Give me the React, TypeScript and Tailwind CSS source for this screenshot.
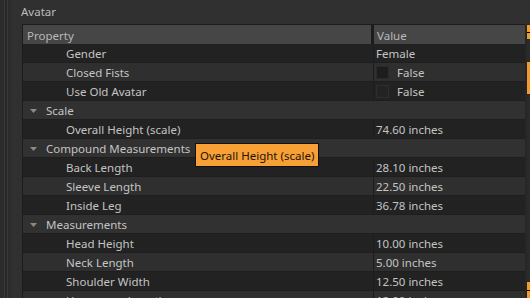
import React from "react";

type Row =
  | { kind: "cat"; label: string }
  | { kind: "prop"; label: string; value: string; check?: "filled" | "empty" };

const rows: Row[] = [
  { kind: "prop", label: "Gender", value: "Female" },
  { kind: "prop", label: "Closed Fists", value: "False", check: "filled" },
  { kind: "prop", label: "Use Old Avatar", value: "False", check: "empty" },
  { kind: "cat", label: "Scale" },
  { kind: "prop", label: "Overall Height (scale)", value: "74.60 inches" },
  { kind: "cat", label: "Compound Measurements" },
  { kind: "prop", label: "Back Length", value: "28.10 inches" },
  { kind: "prop", label: "Sleeve Length", value: "22.50 inches" },
  { kind: "prop", label: "Inside Leg", value: "36.78 inches" },
  { kind: "cat", label: "Measurements" },
  { kind: "prop", label: "Head Height", value: "10.00 inches" },
  { kind: "prop", label: "Neck Length", value: "5.00 inches" },
  { kind: "prop", label: "Shoulder Width", value: "12.50 inches" },
  { kind: "prop", label: "Upper arm Length", value: "12.00 inches" },
];

const Caret = () => (
  <svg width="7" height="4" viewBox="0 0 7 4" className="ml-[7px] mr-[9px] -mt-[1px]">
    <path d="M0 0 L7 0 L3.5 4 Z" fill="#8a8a8a" />
  </svg>
);

const PropertyRow = ({ row, odd }: { row: Row; odd: boolean }) => {
  const bg = odd ? "bg-[#2f2f2f]" : "bg-[#222222]";
  if (row.kind === "cat") {
    return (
      <div className="shrink-0 flex items-center pt-[2px] h-[19px] border-b border-[#1e1e1e] bg-[#313131]">
        <Caret />
        <span className="text-[#c4c4c4]">{row.label}</span>
      </div>
    );
  }
  return (
    <div className={`shrink-0 flex h-[19px] border-b border-[#1e1e1e] ${bg}`}>
      <div className="w-[350px] flex items-center pt-[2px] pl-[43px] text-[#c4c4c4]">{row.label}</div>
      <div className="w-px bg-[#1c1c1c]" />
      <div className="flex-1 flex items-center pt-[2px] pl-[2px] text-[#c4c4c4]">
        {row.check && (
          <span
            className={`w-[13px] h-[13px] mr-[8px] -mt-[2px] border ${
              row.check === "filled" ? "bg-[#1d1d1d] border-[#2b2b2b]" : "bg-[#232323] border-[#2e2e2e]"
            }`}
          />
        )}
        {row.value}
      </div>
    </div>
  );
};

export default function App() {
  return (
    <div
      className="w-[530px] h-[298px] flex overflow-hidden bg-[#303030] text-[11.5px] leading-none"
      style={{ fontFamily: '"Noto Sans", "Open Sans", sans-serif' }}
    >
      {/* left gutter lines */}
      <div className="w-[4px] bg-[#2b2b2b]" />
      <div className="w-px bg-[#3a3a3a]" />
      <div className="w-[3px] bg-[#272727]" />
      <div className="w-px bg-[#3a3a3a]" />
      <div className="w-[3px] bg-[#2c2c2c]" />

      <div className="flex-1 flex flex-col relative min-h-0">
        <div className="shrink-0 h-[24px] flex items-center pl-[10px] text-[#bdbdbd]">Avatar</div>

        <div className="flex flex-1 min-h-0 overflow-hidden">
          <div className="ml-[11px] w-[503px] flex flex-col border-t border-l border-[#1c1c1c]">
            <div className="shrink-0 flex h-[19px] bg-[#1c1c1c]">
              <div className="w-[348px] flex items-center pt-[2px] pl-[4px] bg-[#464646] text-[#b8b8b8]">Property</div>
              <div className="w-[3px]" />
              <div className="flex-1 flex items-center pt-[2px] pl-[3px] bg-[#464646] text-[#b8b8b8]">Value</div>
            </div>
            {rows.map((r, i) => (
              <PropertyRow key={r.label} row={r} odd={i % 2 === 1} />
            ))}
          </div>

          {/* scrollbar */}
          <div className="w-[2px] bg-[#262626]" />
          <div className="flex-1 flex flex-col bg-[#2a2a2a]">
            <div className="shrink-0 mt-[1px] h-[14px] bg-[#f39a2c] flex items-center">
              <div className="w-[3px] h-px bg-black" />
            </div>
            <div className="shrink-0 mt-[23px] h-[32px] bg-[#f39a2c]" />
            <div className="flex-1" />
            <div className="shrink-0 h-[16px] bg-[#f39a2c] flex items-center">
              <div className="w-[3px] h-px bg-black" />
            </div>
          </div>
        </div>

        {/* tooltip */}
        <div className="absolute left-[184px] top-[143px] h-[24px] px-[4px] pt-[2px] flex items-center bg-[#f7a035] border border-[#111] text-[#1e1408]">
          Overall Height (scale)
        </div>
      </div>
    </div>
  );
}
